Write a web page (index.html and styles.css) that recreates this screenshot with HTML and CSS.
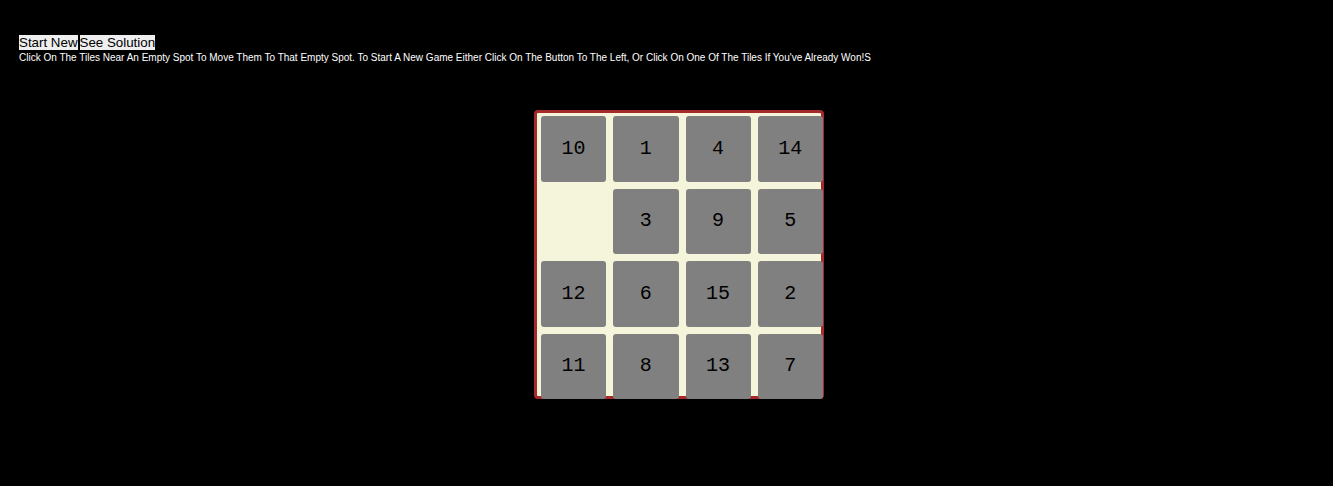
FILE: index.html
```html
<!DOCTYPE html>
<html lang="en">
<head>
<meta charset="utf-8">
<title>Fifteen Puzzle</title>
<link rel="stylesheet" href="styles.css">
</head>
<body>
<header class="intro">
  <div class="controls">
    <button class="control" type="button">Start New</button>
    <button class="control" type="button">See Solution</button>
  </div>
  <p class="help">Click On The Tiles Near An Empty Spot To Move Them To That Empty Spot. To Start A New Game Either Click On The Button To The Left, Or Click On One Of The Tiles If You've Already Won!S</p>
</header>
<main class="game">
  <div class="board">
    <div class="tiles">
      <button class="tile" type="button">10</button>
      <button class="tile" type="button">1</button>
      <button class="tile" type="button">4</button>
      <button class="tile" type="button">14</button>
      <div class="empty"></div>
      <button class="tile" type="button">3</button>
      <button class="tile" type="button">9</button>
      <button class="tile" type="button">5</button>
      <button class="tile" type="button">12</button>
      <button class="tile" type="button">6</button>
      <button class="tile" type="button">15</button>
      <button class="tile" type="button">2</button>
      <button class="tile" type="button">11</button>
      <button class="tile" type="button">8</button>
      <button class="tile" type="button">13</button>
      <button class="tile" type="button">7</button>
    </div>
  </div>
</main>
</body>
</html>
```
FILE: styles.css
```css
* {
  box-sizing: border-box;
}

body {
  margin: 0;
  background: #000;
  color: #fff;
  font-family: "Liberation Sans", Arial, sans-serif;
}

.intro {
  padding: 35px 19px 0;
}

.controls {
  display: flex;
  gap: 2px;
}

.control {
  padding: 0;
  border: 0;
  background: #efefef;
  color: #000;
  font-family: "Liberation Sans", Arial, sans-serif;
  line-height: 15px;
}

.help {
  margin: 2px 0 0;
  font-size: 10px;
  line-height: 12px;
}

.game {
  display: flex;
  justify-content: center;
  padding: 46px 0 0 25px;
}

.board {
  width: 290px;
  height: 289px;
  padding: 3px 0 0 4px;
  border: 3px solid brown;
  border-radius: 4px;
  background: beige;
}

/* The tiles run over the right and bottom borders of the board. */
.tiles {
  display: grid;
  grid-template: repeat(4, 1fr) / repeat(4, 1fr);
  gap: 7px;
  width: 282px;
  height: 283px;
}

.tile {
  padding: 0;
  border: 0;
  border-radius: 3px;
  background: gray;
  color: #000;
  font: 20px/24px "Liberation Mono", "Courier New", monospace;
}
```
